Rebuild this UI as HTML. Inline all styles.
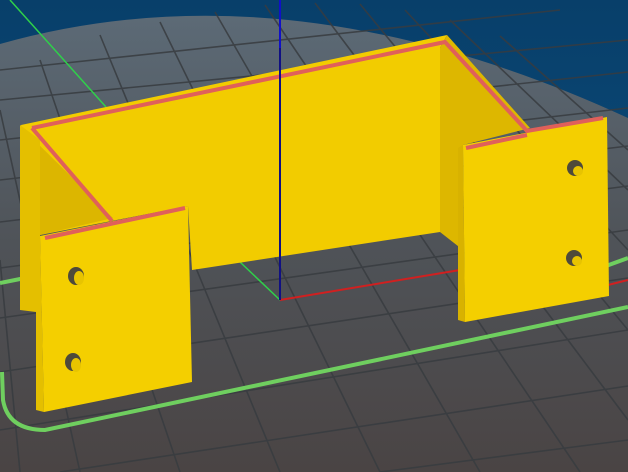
<!DOCTYPE html>
<html><head><style>html,body{margin:0;padding:0;width:628px;height:472px;overflow:hidden;background:#0a4a78}</style></head>
<body>
<svg width="628" height="472" viewBox="0 0 628 472" xmlns="http://www.w3.org/2000/svg">
<defs>
<linearGradient id="bed" x1="0" y1="0" x2="0" y2="1">
<stop offset="0" stop-color="#5c6a76"/>
<stop offset="0.5" stop-color="#4f5358"/>
<stop offset="1" stop-color="#4a4444"/>
</linearGradient>
<linearGradient id="sky" x1="0" y1="0" x2="0" y2="1">
<stop offset="0" stop-color="#083f6a"/><stop offset="1" stop-color="#0e5384"/>
</linearGradient>
</defs>
<rect width="628" height="472" fill="url(#sky)"/>
<path d="M0,44 Q290,-38 628,118 L628,472 L0,472 Z" fill="url(#bed)"/>
<g stroke="#383c40" stroke-width="1.6" fill="none" opacity="0.85">
<path d="M0,70 L560,10"/><path d="M0,100 L628,40"/><path d="M0,140 L628,72"/>
<path d="M0,180 L628,108"/><path d="M0,222 L628,146"/><path d="M0,268 L628,186"/>
<path d="M0,318 L628,230"/><path d="M0,372 L628,278"/><path d="M0,430 L628,330"/>
<path d="M60,472 L628,386"/><path d="M380,472 L628,440"/>
<path d="M40,60 L180,472"/><path d="M100,35 L280,472"/><path d="M160,22 L380,472"/>
<path d="M215,12 L480,472"/><path d="M265,5 L580,472"/><path d="M315,3 L628,420"/>
<path d="M360,4 L628,330"/><path d="M405,10 L628,250"/><path d="M450,20 L628,190"/>
<path d="M500,36 L628,150"/><path d="M0,110 L80,472"/><path d="M0,260 L20,472"/>
</g>
<path d="M10,0 L106,107" stroke="#2fd04a" stroke-width="1.5"/>
<path d="M240,262 L280,300" stroke="#2fd04a" stroke-width="1.5"/>
<path d="M280,300 L460,270" stroke="#d02020" stroke-width="2"/>
<path d="M608,285 L628,280" stroke="#d02020" stroke-width="2"/>
<path d="M2,372 L3,400 Q8,430 45,430 L628,307" stroke="#6fcf5f" stroke-width="4" fill="none"/>
<path d="M0,283 L25,278" stroke="#6fcf5f" stroke-width="4"/>
<path d="M606,266 L628,258" stroke="#6fcf5f" stroke-width="4"/>
<!-- back wall -->
<path d="M21,125 L447,35 L440,48 L440,232 L192,270 L188,206 L40,235 Z" fill="#f2cc00"/>
<!-- left wall inner -->
<path d="M24,130 L113,218 L40,235 Z" fill="#dcb600"/>
<!-- left wall outer side -->
<path d="M20,125 L40,140 L40,235 L44,412 L36,410 L36,312 L20,310 Z" fill="#e4bf00"/>
<!-- right wall inner -->
<path d="M440,48 L447,35 L530,128 L463,145 L463,250 L440,232 Z" fill="#ddb700"/>
<!-- left tab -->
<path d="M40,236 L188,206 L192,382 L44,412 Z" fill="#f4cf00"/>
<!-- right tab -->
<path d="M458,148 L463,145 L465,322 L458,320 Z" fill="#d8b200"/>
<path d="M463,145 L607,117 L609,296 L465,322 Z" fill="#f4cf00"/>
<!-- red top perimeters -->
<g stroke="#e0605a" stroke-width="4" fill="none" stroke-linejoin="miter">
<path d="M32,128 L445,42 L527,131 L603,118"/>
<path d="M32,128 L112,221"/>
<path d="M45,238 L185,208"/>
<path d="M466,148 L527,135"/>
</g>
<!-- holes -->
<g fill="#4e4a3a">
<ellipse cx="76" cy="276" rx="8" ry="9"/><ellipse cx="73" cy="362" rx="8" ry="9"/>
<ellipse cx="575" cy="168" rx="8" ry="8"/><ellipse cx="574" cy="258" rx="8" ry="8"/>
</g>
<g fill="#e8c400">
<ellipse cx="79" cy="278" rx="5" ry="7"/><ellipse cx="76" cy="365" rx="5" ry="7"/>
<ellipse cx="578" cy="171" rx="5" ry="5"/><ellipse cx="577" cy="261" rx="5" ry="5"/>
</g>
<path d="M280,0 L280,300" stroke="#1010c8" stroke-width="2"/>
<path d="M280,48 L280,300" stroke="#101030" stroke-width="1.5" opacity="0.6"/>
</svg>
</body></html>
